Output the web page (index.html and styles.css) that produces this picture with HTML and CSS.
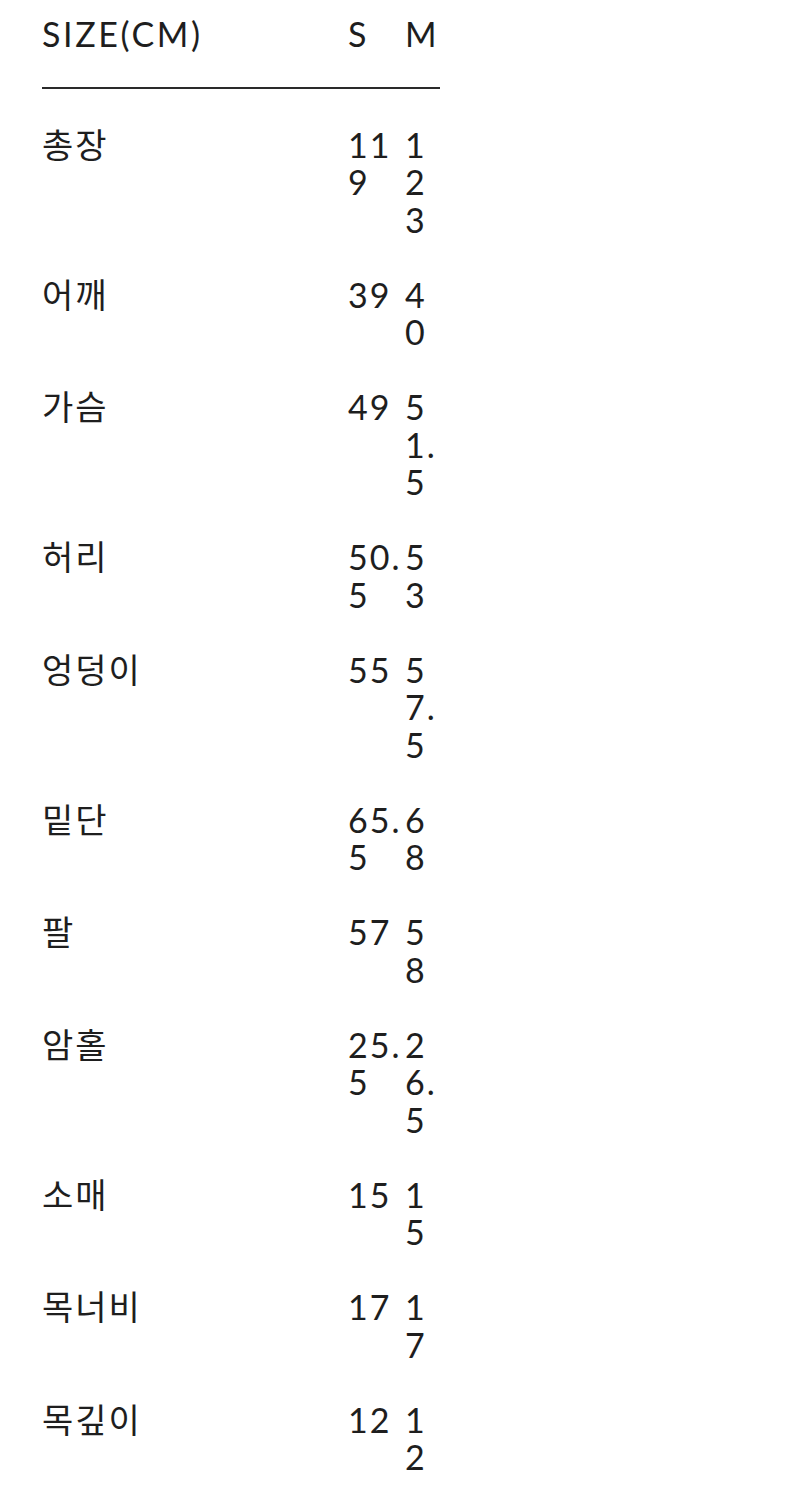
FILE: index.html
```html
<!DOCTYPE html>
<html lang="ko">
<head>
<meta charset="utf-8">
<title>Size</title>
<link rel="stylesheet" href="styles.css">
</head>
<body>
<div class="sizes">
  <div class="row head">
    <div class="label">SIZE(CM)</div>
    <div class="val">S</div>
    <div class="val">M</div>
  </div>
  <div class="body">
    <div class="row"><div class="label">총장</div><div class="val">119</div><div class="val">123</div></div>
    <div class="row"><div class="label">어깨</div><div class="val">39</div><div class="val">40</div></div>
    <div class="row"><div class="label">가슴</div><div class="val">49</div><div class="val">51.5</div></div>
    <div class="row"><div class="label">허리</div><div class="val">50.5</div><div class="val">53</div></div>
    <div class="row"><div class="label">엉덩이</div><div class="val">55</div><div class="val">57.5</div></div>
    <div class="row"><div class="label">밑단</div><div class="val">65.5</div><div class="val">68</div></div>
    <div class="row"><div class="label">팔</div><div class="val">57</div><div class="val">58</div></div>
    <div class="row"><div class="label">암홀</div><div class="val">25.5</div><div class="val">26.5</div></div>
    <div class="row"><div class="label">소매</div><div class="val">15</div><div class="val">15</div></div>
    <div class="row"><div class="label">목너비</div><div class="val">17</div><div class="val">17</div></div>
    <div class="row"><div class="label">목깊이</div><div class="val">12</div><div class="val">12</div></div>
  </div>
</div>
</body>
</html>
```
FILE: styles.css
```css
html, body {
  margin: 0;
  padding: 0;
  background: #ffffff;
}
body {
  font-family: "Lato", "Noto Sans CJK KR", sans-serif;
  font-size: 34px;
  line-height: 37.5px;
  color: #1e1e1e;
  letter-spacing: 2px;
}
.sizes {
  width: 398px;
  padding: 15px 0 0 42px;
}
.row {
  display: grid;
  grid-template-columns: 306px 57px 35px;
  align-items: start;
}
.head {
  padding-bottom: 34px;
  border-bottom: 2px solid #2a2a2a;
}
.head .label {
  letter-spacing: 2.6px;
}
.body {
  display: flex;
  flex-direction: column;
  gap: 37.5px;
  padding-top: 37px;
}
.val {
  word-break: break-all;
  overflow-wrap: anywhere;
}
```
